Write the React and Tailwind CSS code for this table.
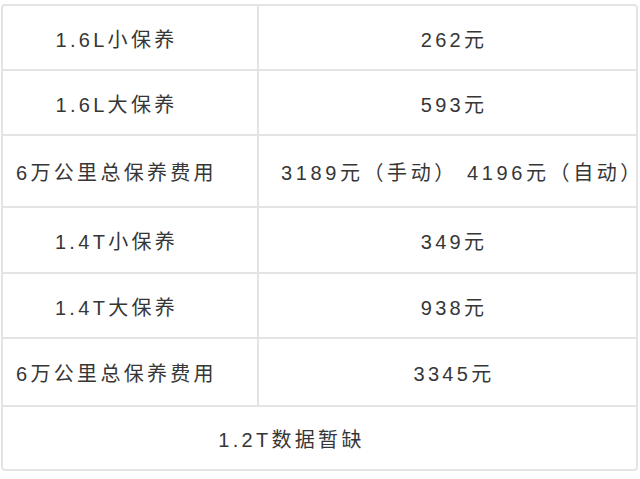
import React from "react";

const rows = [
  { name: "1.6L小保养", price: "262元", h: "h-[63px]" },
  { name: "1.6L大保养", price: "593元", h: "h-[65px]" },
  { name: "6万公里总保养费用", price: "3189元（手动） 4196元（自动）", h: "h-[72px]", wide: true },
  { name: "1.4T小保养", price: "349元", h: "h-[66px]" },
  { name: "1.4T大保养", price: "938元", h: "h-[65px]" },
  { name: "6万公里总保养费用", price: "3345元", h: "h-[68px]" },
];

const App = () => {
  return (
    <div
      className="w-[640px] h-[479px] bg-white overflow-hidden pt-[4px] pl-[1px] text-[20px] tracking-[3.3px] text-[#363636]"
      style={{ fontFamily: '"Liberation Sans", "Noto Sans CJK SC", sans-serif' }}
    >
      <div className="w-[637px] border-2 border-[#e4e4e4] rounded-[4px]">
        {rows.map((row, i) => (
          <div
            key={i}
            className={`flex ${row.h} ${i > 0 ? "border-t-2 border-[#e4e4e4]" : ""}`}
          >
            <div className="w-[256px] shrink-0 border-r-2 border-[#e4e4e4] flex items-center justify-center pr-[27px] pt-[4px]">
              <span className="whitespace-nowrap">{row.name}</span>
            </div>
            {row.wide ? (
              <div className="flex-1 min-w-0 flex items-center pl-[22px] pt-[4px]">
                <span className="whitespace-nowrap tracking-[3.6px]">{row.price}</span>
              </div>
            ) : (
              <div className="flex-1 flex items-center justify-center pl-[13px] pt-[4px]">
                <span className="whitespace-nowrap">{row.price}</span>
              </div>
            )}
          </div>
        ))}
        <div className="flex h-[64px] border-t-2 border-[#e4e4e4] items-center justify-center pr-[56px] pt-[4px]">
          <span className="whitespace-nowrap">1.2T数据暂缺</span>
        </div>
      </div>
    </div>
  );
};

export default App;
